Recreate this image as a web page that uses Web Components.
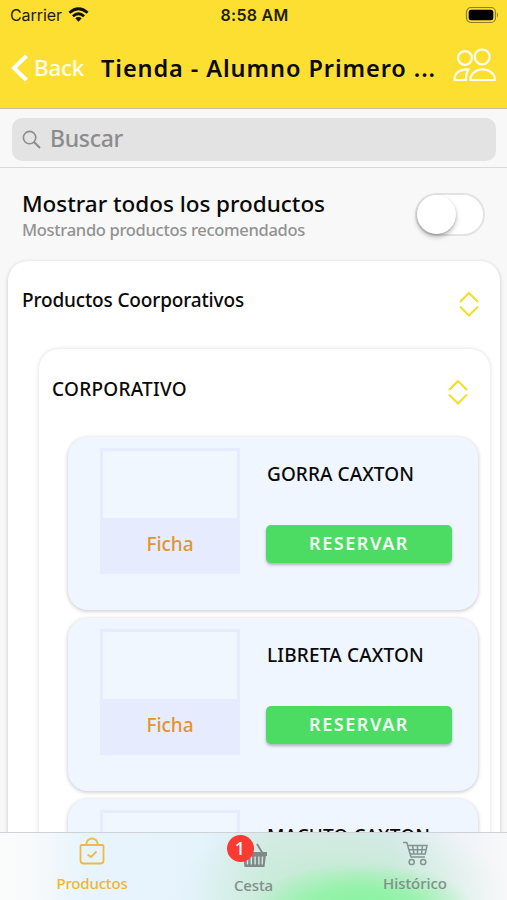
<!DOCTYPE html>
<html lang="es"><head><meta charset="utf-8"><title>Tienda</title>
<style>
html,body{margin:0;height:100%;overflow:hidden;background:#f8f8f8}
body{font-family:"Noto Sans","Open Sans",sans-serif;color:#0a0a0a}
</style></head><body>
<shop-app></shop-app>
<script>
const define=(name,html,init)=>customElements.define(name,class extends HTMLElement{
  connectedCallback(){
    if(this.shadowRoot)return;
    this.attachShadow({mode:'open'}).innerHTML=html;
    if(init)init(this,this.shadowRoot);
  }
});

// One line of text, tracked so that it fills the width given in "w".
define('fit-text',`<style>:host{display:block;white-space:nowrap;flex:none}span{display:inline-block;white-space:pre}</style><span></span>`,(el,r)=>{
  const s=r.querySelector('span'),w=+el.getAttribute('w');
  s.textContent=el.getAttribute('text');
  el.style.width=w+'px';
  s.style.letterSpacing=((w-s.getBoundingClientRect().width)/s.textContent.length)+'px';
});

define('status-bar',`<style>
:host{display:grid;grid-template-columns:1fr auto 1fr;align-items:center;height:30px;padding:0 8px 0 10px;font-family:Inter,"Liberation Sans",sans-serif;font-size:16px;line-height:20px;color:#211d05}
.l{display:flex;align-items:center;gap:6px}.t{font-weight:600}.b{justify-self:end;display:block}
</style>
<div class="l"><fit-text w="52" text="Carrier"></fit-text>
<svg width="21" height="16" viewBox="0 0 21 16" fill="none" stroke="#111" stroke-width="2.800"><path d="M1.400 5.800Q10.500-2.200 19.600 5.800M4.900 9.200Q10.500 4.400 16.100 9.200"/><path d="M7.300 11.300Q10.500 8.800 13.700 11.300L10.500 14.800Z" fill="#111" stroke="none"/></svg></div>
<fit-text class="t" w="68" text="8:58 AM"></fit-text>
<svg class="b" width="34" height="18" viewBox="0 0 34 18"><rect x="1.500" y="1.500" width="29" height="15" rx="4.500" fill="none" stroke="#8d7f22" stroke-width="1.200"/><rect x="3.700" y="3.700" width="24.600" height="10.600" rx="2.500" fill="#000"/><path d="M32 6.500q2 2.500 0 5z" fill="#8d7f22"/></svg>`);

define('nav-bar',`<style>
:host{display:flex;align-items:center;height:78px;padding:0 10px 2px 11px;box-sizing:border-box}
.chev{margin-right:6px;flex:none}.back{font-size:22.500px;line-height:30px;font-weight:500;color:#fffdf0}
.title{margin-left:17px;font-size:23.500px;line-height:30px;font-weight:600;color:#0b0a02}
.people{margin-left:auto;margin-top:-6px;flex:none}
</style>
<svg class="chev" width="17" height="28" viewBox="0 0 17 28" fill="none" stroke="#fff" stroke-width="4"><path d="M15.500 1.800L3 14L15.500 26.200"/></svg>
<fit-text class="back" w="50" text="Back"></fit-text>
<fit-text class="title" w="335" text="Tienda - Alumno Primero ..."></fit-text>
<svg class="people" width="44" height="34" viewBox="0 0 44 34" fill="none" stroke="#fffdf0" stroke-width="2.200" stroke-linejoin="round"><circle cx="29.200" cy="8.800" r="7.500"/><circle cx="12" cy="10" r="6.900"/><path d="M17.500 32H41.800Q42.500 28.500 39 25Q35 21.300 29.700 21.300T20.300 25Q16.900 28.500 17.500 32Z"/><path d="M13 32H1.500Q1 21.500 15.500 21.300Q12.700 25.500 13 32Z"/></svg>`);

define('search-bar',`<style>
:host{display:block;box-sizing:border-box;height:60px;padding:9px 11px 8px 12px;background:#f8f8f8;border-top:1px solid #c3bfa5;border-bottom:1px solid #dadada}
.box{height:42.500px;border-radius:10px;background:#e3e3e3;display:flex;align-items:center;padding-left:10px;gap:9px;color:#8c8c8c;font-size:23px;line-height:32px;font-weight:500}
fit-text{margin-top:-3px}
</style><div class="box"><svg width="19" height="19" viewBox="0 0 19 19" fill="none" stroke="#8c8c8c" stroke-width="1.600"><circle cx="7.600" cy="7.600" r="6.200"/><path d="M12 12L18 18" stroke-width="2"/></svg><fit-text w="73" text="Buscar"></fit-text></div>`);

define('toggle-row',`<style>
:host{display:flex;justify-content:space-between;align-items:flex-start;height:93px;box-sizing:border-box;padding:21px 22px 0 22px}
.a{font-size:22.500px;line-height:30px;font-weight:500}.b{font-size:16.500px;line-height:22px;color:#929292;font-weight:500}
.sw{width:70px;height:43px;box-sizing:border-box;border:2px solid #e3e3e3;border-radius:22px;background:#fff;margin-top:4px}
.k{width:39px;height:39px;border-radius:50%;background:#fff;box-shadow:0 3px 5px #0004,0 1px 2px #0002}
</style><div><fit-text class="a" w="303" text="Mostrar todos los productos"></fit-text><fit-text class="b" w="283" text="Mostrando productos recomendados"></fit-text></div><div class="sw"><div class="k"></div></div>`);

define('group-panel',`<style>
:host{display:block;background:#fff;border-radius:20px;box-sizing:border-box}
:host([level="1"]){height:700px;margin:0 7px 0 8px;box-shadow:0 1px 4px #0003;--pt:24px;--pl:14px;--pr:21px;--ic:30px}
:host([level="2"]){height:600px;margin:0 10px 0 31px;box-shadow:0 0 4px #00000026;--pt:25px;--pl:13px;--pr:22px;--ic:30px}
header{height:88px;box-sizing:border-box;display:flex;justify-content:space-between;align-items:flex-start;padding:0 var(--pr) 0 var(--pl)}
fit-text{margin-top:var(--pt);font-size:19px;line-height:30px;font-weight:500}
svg{margin-top:var(--ic);display:block}
</style><header><fit-text></fit-text><svg width="20" height="26" viewBox="0 0 20 26" fill="none" stroke="#f5dc27" stroke-width="2"><path d="M1 11L10 2L19 11M1 15.500L10 24.500L19 15.500"/></svg></header><slot></slot>`,(el,r)=>{
  const old=r.querySelector('fit-text'),t=document.createElement('fit-text');
  t.setAttribute('text',el.getAttribute('heading'));t.setAttribute('w',el.getAttribute('w'));
  old.replaceWith(t);
});

define('product-card',`<style>
:host{display:grid;grid-template-columns:140px 186px;column-gap:26px;box-sizing:border-box;height:173px;margin:0 12px 8px 29px;padding:11px 0 0 32px;border-radius:20px;background:#f0f6ff;box-shadow:0 1px 4px #0000003d}
.pic{height:126px;box-sizing:border-box;border:3px solid #e6ecfe;display:flex;flex-direction:column;justify-content:flex-end;background:#f0f7ff}
.ficha{height:53px;background:#e6ecfe;display:flex;justify-content:center;align-items:flex-start;font-size:19px;line-height:52px;font-weight:500;color:#e09530}
.info{padding-top:12px}.name{font-size:19px;line-height:28px;font-weight:500;margin-left:1px}
.btn{margin-top:37px;height:38px;border-radius:5px;background:#4cdb63;box-shadow:0 2px 3px #0004;display:flex;justify-content:center;color:#f4fff5;font-size:18px;line-height:36px;font-weight:600}
</style><div class="pic"><div class="ficha"><fit-text w="47" text="Ficha"></fit-text></div></div><div class="info"><i></i><div class="btn"><fit-text w="100" text="RESERVAR"></fit-text></div></div>`,(el,r)=>{
  const t=document.createElement('fit-text');t.className='name';
  t.setAttribute('text',el.getAttribute('name'));t.setAttribute('w',el.getAttribute('w'));
  r.querySelector('i').replaceWith(t);
});

define('tab-bar',`<style>
:host{position:absolute;left:0;right:0;bottom:0;height:68px;box-sizing:border-box;border-top:1px solid #cdd3d5;display:grid;grid-template-columns:184px 139px 184px;font-size:15px;line-height:18px;font-weight:500;color:#838d8b;
background:radial-gradient(ellipse 112px 46px at 362px 76px,#86f39d 0%,#93f3a8e6 50%,#a7efb800 100%),radial-gradient(ellipse 165px 80px at 340px 60px,#bcebcab5 20%,#cbead700 100%),linear-gradient(90deg,#fbfbfb 0,#f8fafb 30px,#e8f4fd 85px,#e5f3fd 200px,#d9ebe9 270px,#dbe9ed 390px,#edf2f7 450px,#f8f8f9 100%)}
.tab{display:flex;flex-direction:column;align-items:center}.on{color:#efb52d}
svg{display:block}.bag{margin:4px 0 9px}.basket{margin:10px 0 8px}.cart{margin:8px 0 8px}
.pos{position:relative}.badge{position:absolute;left:-14px;top:2px;width:27px;height:27px;border-radius:50%;background:#fb3a33;color:#fff;text-align:center;font-size:18px;line-height:26px}
</style>
<div class="tab on"><svg class="bag" width="26" height="28" viewBox="0 0 26 28" fill="none" stroke="#efb947" stroke-width="1.800"><path d="M2.500 8H23.500Q24.500 8 24.500 9V23.500Q24.500 26.500 21.500 26.500H4.500Q1.500 26.500 1.500 23.500V9Q1.500 8 2.500 8ZM7.500 8V6.500a5.500 5 0 0 1 11 0V8"/><path d="M8.500 17.500L12 20L17.500 14.500"/></svg><fit-text w="71" text="Productos"></fit-text></div>
<div class="tab"><div class="pos"><svg class="basket" width="26" height="25" viewBox="0 0 26 25"><g fill="none" stroke="#7e8988" stroke-width="1.800"><path d="M5 10L10 1M16 1L21.500 10"/></g><path d="M1 9H26V13H24.800L23.500 24H3.500L2.200 13H1Z" fill="#7e8988"/><path d="M6.500 13.500V21.500M10.300 13.500V21.500M14.100 13.500V21.500M17.900 13.500V21.500M21.500 13.500L21.200 21.500" stroke="#d6e9e7" stroke-width="1.400"/></svg><div class="badge">1</div></div><fit-text w="39" text="Cesta"></fit-text></div>
<div class="tab"><svg class="cart" width="25" height="25" viewBox="0 0 25 25" fill="none" stroke="#829490" stroke-width="1.500"><path d="M0 1.500H3.800L8 16H22M4.500 4.500H24L22.200 13H7M5.500 8.800H23M9.500 4.500L11 13M14.500 4.500V13M19.500 4.500L18.500 13"/><circle cx="8.700" cy="21" r="2.600"/><circle cx="20.200" cy="21" r="2.600"/></svg><fit-text w="64" text="Histórico"></fit-text></div>`);

define('shop-app',`<style>
:host{display:block;position:relative;width:507px;height:900px;overflow:hidden;background:#f8f8f8}
.top{background:#fddf31}
</style><div class="top"><status-bar></status-bar><nav-bar></nav-bar></div><search-bar></search-bar><toggle-row></toggle-row>
<group-panel level="1" heading="Productos Coorporativos" w="222"><group-panel level="2" heading="CORPORATIVO" w="135">
<product-card name="GORRA CAXTON" w="147"></product-card><product-card name="LIBRETA CAXTON" w="157"></product-card><product-card name="MACUTO CAXTON" w="163"></product-card>
</group-panel></group-panel><tab-bar></tab-bar>`);
</script></body></html>
